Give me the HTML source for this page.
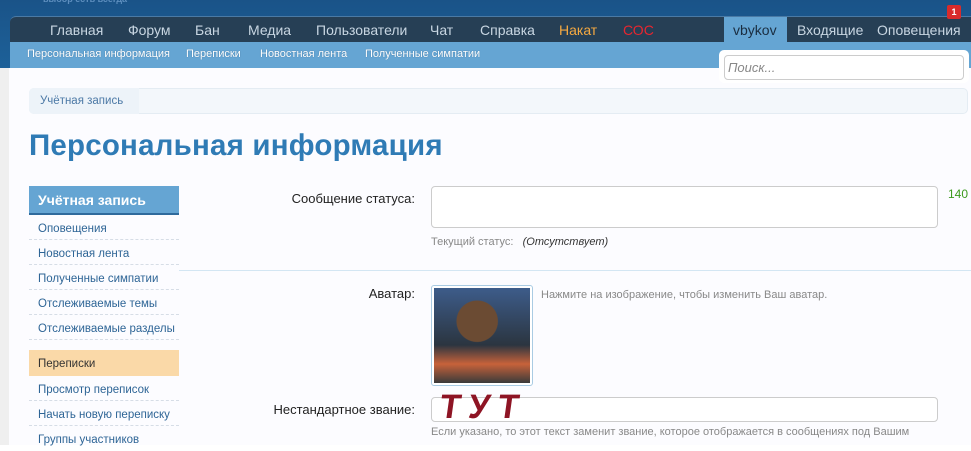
<!DOCTYPE html>
<html><head><meta charset="utf-8"><style>
*{margin:0;padding:0;box-sizing:border-box}
body{width:971px;height:445px;overflow:hidden;background:#fff;font-family:"Liberation Sans","DejaVu Sans",sans-serif;position:relative}
.a{position:absolute}
#hdr{left:0;top:0;width:971px;height:68px;background:linear-gradient(#1a5388,#1d6199)}
#nav{left:10px;top:16px;width:961px;height:27px;background:#263f55;border-radius:6px 0 0 0;border-top:1px solid #4a7aa5}
#nav span{position:absolute;top:5px;font-size:14px;color:#c8d6e2}
#sub{left:10px;top:42px;width:961px;height:26px;background:#65a5d3}
#sub span{position:absolute;top:6px;font-size:11px;color:#fff;text-shadow:0 0 1px #3b6d96}
#page{left:9px;top:68px;width:962px;height:377px;background:#fcfcff}
#lm{left:0;top:68px;width:9px;height:377px;background:#efefef}
.lbl{position:absolute;font-size:13px;color:#222;text-align:right;right:556px}
.side{position:absolute;left:29px;width:150px;height:25px;border-bottom:1px dashed #d6dde6;font-size:11.5px;color:#2e6596;padding:8px 0 0 9px}
</style></head><body>
<div class="a" id="hdr"></div>
<div class="a" style="left:43px;top:-6px;font-size:9px;color:#5e8fbf;font-weight:bold">выбор есть всегда</div>
<div class="a" id="nav">
<span style="left:40px">Главная</span><span style="left:118px">Форум</span><span style="left:185px">Бан</span><span style="left:238px">Медиа</span><span style="left:306px">Пользователи</span><span style="left:420px">Чат</span><span style="left:470px">Справка</span><span style="left:549px;color:#f5a941">Накат</span><span style="left:613px;color:#e8262f">СОС</span>
<div style="position:absolute;left:714px;top:-1px;width:63px;height:27px;background:#65a5d3;border-top:1px solid #4a7aa5"></div>
<span style="left:723px;color:#1a2d40">vbykov</span><span style="left:787px">Входящие</span><span style="left:867px">Оповещения</span>
</div>
<div class="a" style="left:947px;top:5px;width:14px;height:14px;background:#d92b2b;border-radius:2px;color:#fff;font-size:9px;font-weight:bold;text-align:center;line-height:14px">1</div>
<div class="a" id="sub">
<span style="left:17px">Персональная информация</span><span style="left:176px">Переписки</span><span style="left:250px">Новостная лента</span><span style="left:355px">Полученные симпатии</span>
</div>
<div class="a" id="lm"></div>
<div class="a" id="page"></div>
<div class="a" style="left:719px;top:50px;width:250px;height:33px;background:#fff;border-radius:5px"></div>
<div class="a" style="left:724px;top:55px;width:240px;height:25px;border:1px solid #ccc;border-radius:4px;background:#fff;font-size:13px;font-style:italic;color:#888;padding:4px 3px">Поиск...</div>
<div class="a" style="left:29px;top:88px;width:939px;height:26px;background:#f3f7fb;border:1px solid #e4ecf3;border-radius:5px"></div>
<div class="a" style="left:29px;top:88px;width:110px;height:26px;background:#edf3f9;border-radius:5px 0 0 5px"></div>
<div class="a" style="left:40px;top:95px;font-size:11.5px;color:#4c79a6">Учётная запись</div>
<div class="a" style="left:29px;top:129px;font-size:29.5px;font-weight:bold;color:#2f7bb5;letter-spacing:0.2px">Персональная информация</div>
<div class="a" style="left:29px;top:186px;width:150px;height:29px;background:#65a5d3;border-bottom:2px solid #2f6a9c;color:#fff;font-weight:bold;font-size:14px;padding:6px 0 0 9px">Учётная запись</div>
<div class="side" style="top:215px">Оповещения</div>
<div class="side" style="top:240px">Новостная лента</div>
<div class="side" style="top:265px">Полученные симпатии</div>
<div class="side" style="top:290px">Отслеживаемые темы</div>
<div class="side" style="top:315px">Отслеживаемые разделы</div>
<div class="side" style="top:350px;height:26px;background:#fad9a8;border:0;color:#333">Переписки</div>
<div class="side" style="top:376px">Просмотр переписок</div>
<div class="side" style="top:401px">Начать новую переписку</div>
<div class="side" style="top:426px;border:0">Группы участников</div>
<div class="lbl" style="top:191px">Сообщение статуса:</div>
<div class="a" style="left:431px;top:186px;width:507px;height:42px;border:1px solid #ccc;border-radius:4px;background:#fff"></div>
<div class="a" style="left:948px;top:187px;font-size:12px;color:#3c9a1e">140</div>
<div class="a" style="left:431px;top:236px;font-size:11px;color:#888">Текущий статус: &nbsp;&nbsp;<i style="color:#333">(Отсутствует)</i></div>
<div class="a" style="left:179px;top:270px;width:792px;height:1px;background:#d3e6f3"></div>
<div class="lbl" style="top:286px">Аватар:</div>
<div class="a" style="left:431px;top:285px;width:102px;height:101px;border:1px solid #a9cbe3;border-radius:3px;background:#fff;padding:2px">
<div style="width:100%;height:100%;background:radial-gradient(circle at 45% 35%,#6b4b33 0 25%,transparent 26%),linear-gradient(#3d5c8a,#2b3540 60%,#c7623a 80%,#3a3a3a)"></div></div>
<div class="a" style="left:541px;top:289px;font-size:11px;color:#888">Нажмите на изображение, чтобы изменить Ваш аватар.</div>
<div class="lbl" style="top:402px">Нестандартное звание:</div>
<div class="a" style="left:431px;top:397px;width:507px;height:25px;border:1px solid #ccc;border-radius:4px;background:#fff"></div>
<div class="a" style="left:440px;top:388px;font-size:34px;font-weight:bold;color:#8e1424;letter-spacing:8px;transform:skewX(-8deg)">ТУТ</div>
<div class="a" style="left:431px;top:426px;font-size:11px;color:#888">Если указано, то этот текст заменит звание, которое отображается в сообщениях под Вашим</div>
</body></html>
